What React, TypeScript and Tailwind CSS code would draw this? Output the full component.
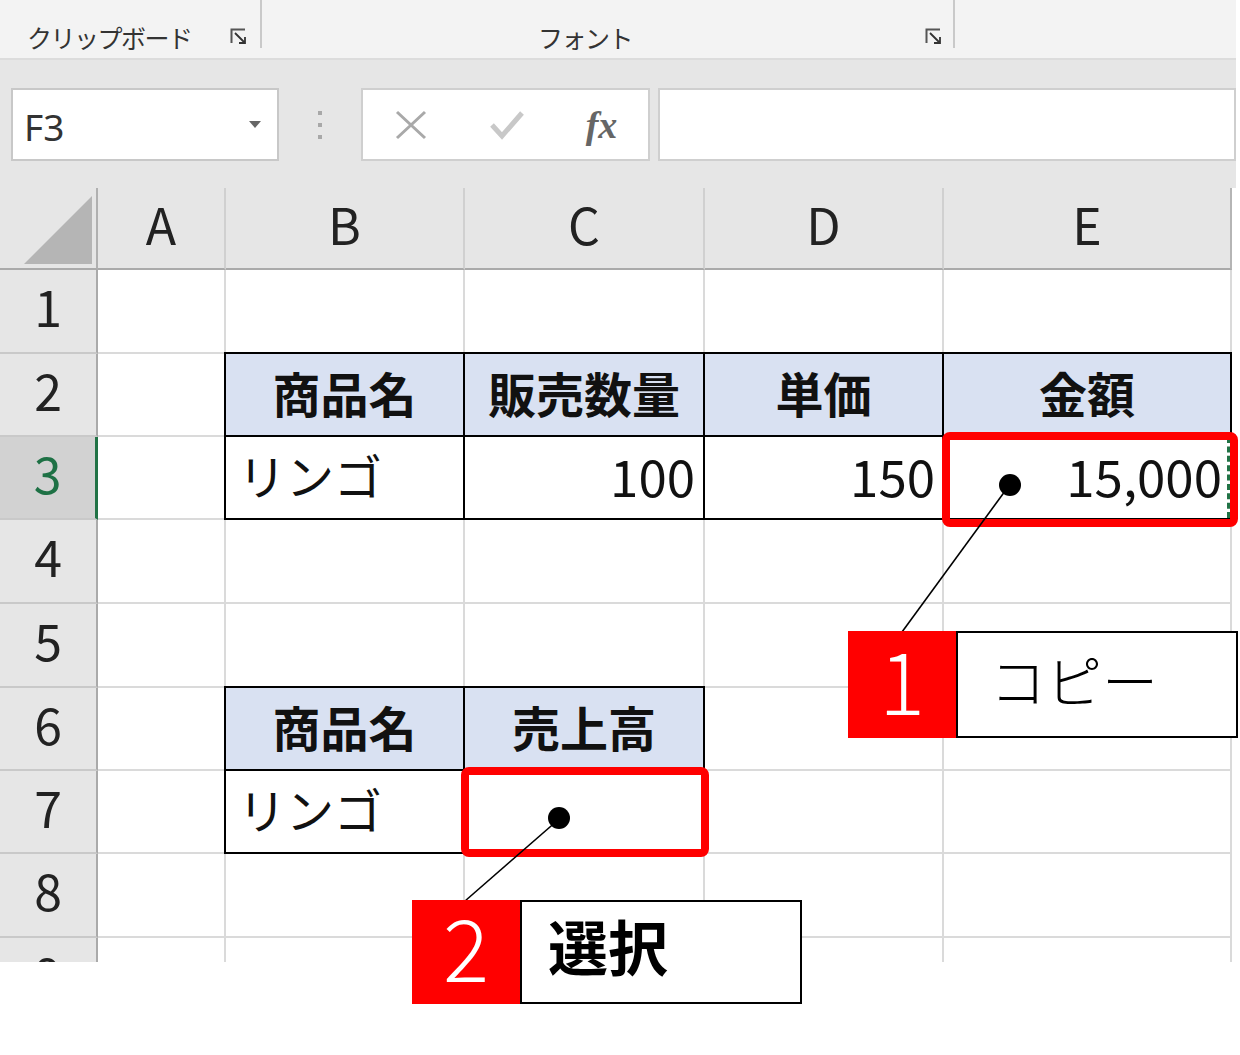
import React from 'react';

const letters = ['A', 'B', 'C', 'D', 'E'];
const colStart = ['col-start-1', 'col-start-2', 'col-start-3', 'col-start-4', 'col-start-5', 'col-start-6'];
const rowStart = [
    'row-start-1',
    'row-start-2',
    'row-start-3',
    'row-start-4',
    'row-start-5',
    'row-start-6',
    'row-start-7',
    'row-start-8',
    'row-start-9',
    'row-start-10',
];

function LauncherIcon() {
    return (
        <svg width="18" height="18" viewBox="0 0 18 18" className="shrink-0">
            <path d="M1.5 15 V1.5 H15" fill="none" stroke="#555" strokeWidth="2" />
            <path d="M5 5 L15 15 M15 9 V15 H9" fill="none" stroke="#333" strokeWidth="1.8" />
        </svg>
    );
}

function Ribbon() {
    return (
        <div className="flex h-[60px] w-[1236px] bg-[#f3f3f3] border-b-2 border-[#dcdcdc] text-[#333] font-['Noto_Sans_CJK_JP',sans-serif]">
            <div className="w-[262px] h-[48px] border-r-2 border-[#c9c9c9] flex items-center pl-[27px] pr-[12px] pt-[26px]">
                <span className="text-[25px] leading-none tracking-[-1.5px]">クリップボード</span>
                <span className="ml-auto">
                    <LauncherIcon />
                </span>
            </div>
            <div className="w-[693px] h-[48px] border-r-2 border-[#c9c9c9] flex items-center pl-[276px] pr-[10px] pt-[26px]">
                <span className="text-[25px] leading-none tracking-[-1.5px]">フォント</span>
                <span className="ml-auto">
                    <LauncherIcon />
                </span>
            </div>
        </div>
    );
}

function FormulaBar() {
    return (
        <div className="h-[128px] w-[1236px] bg-[#e6e6e6] pt-[28px] flex items-start">
            <div className="ml-[11px] w-[268px] h-[73px] bg-white border-2 border-[#c8c8c8] flex items-center pl-[11px] pr-[16px]">
                <span className="text-[37px] leading-none text-[#333] font-['Noto_Sans',sans-serif] pt-[4px]">F3</span>
                <svg width="12" height="7" viewBox="0 0 12 7" className="ml-auto">
                    <path d="M0 0 H12 L6 7 Z" fill="#666" />
                </svg>
            </div>
            <div className="w-[82px] h-[73px] flex items-center justify-center">
                <div className="flex flex-col gap-[8px]">
                    <div className="w-[4px] h-[4px] bg-[#a8a8a8]" />
                    <div className="w-[4px] h-[4px] bg-[#a8a8a8]" />
                    <div className="w-[4px] h-[4px] bg-[#a8a8a8]" />
                </div>
            </div>
            <div className="w-[289px] h-[73px] bg-white border-2 border-[#cfcfcf] flex items-center">
                <div className="w-[96px] flex justify-center">
                    <svg width="32" height="30" viewBox="0 0 32 30">
                        <path d="M2 2 L30 28 M30 2 L2 28" stroke="#a9a9a9" strokeWidth="3" fill="none" />
                    </svg>
                </div>
                <div className="w-[96px] flex justify-center">
                    <svg width="34" height="30" viewBox="0 0 34 30">
                        <path d="M2 15 L12 26 L32 3" stroke="#c8c8c8" strokeWidth="5" fill="none" />
                    </svg>
                </div>
                <div className="w-[93px] flex justify-center">
                    <span className="text-[38px] leading-none italic font-bold text-[#666] font-['Liberation_Serif',serif]">fx</span>
                </div>
            </div>
            <div className="ml-[8px] w-[578px] h-[73px] bg-white border-2 border-[#cfcfcf]" />
        </div>
    );
}

function Grid() {
    const cells: React.ReactNode[] = [];

    // header row
    cells.push(
        <div key="corner" className="col-start-1 row-start-1 bg-[#e6e6e6] border-r-2 border-b-2 border-r-[#b0b0b0] border-b-[#aaaaaa] flex items-end pl-[24px] pb-[4px]">
            <svg width="68" height="68" viewBox="0 0 68 68">
                <path d="M68 0 V68 H0 Z" fill="#b5b5b5" />
            </svg>
        </div>
    );
    letters.forEach((l, i) => {
        cells.push(
            <div
                key={'h' + l}
                className={
                    colStart[i + 1] +
                    ' row-start-1 bg-[#e6e6e6] border-b-2 border-b-[#aaaaaa] flex items-center justify-center pb-[11px] text-[50px] leading-none text-[#222] ' +
                    (i === 4 ? 'border-r-2 border-r-[#b5b5b5]' : 'border-r-2 border-r-[#d0d0d0]')
                }
            >
                {l}
            </div>
        );
    });

    for (let r = 1; r <= 9; r++) {
        const selected = r === 3;
        cells.push(
            <div
                key={'r' + r}
                className={
                    'col-start-1 ' +
                    rowStart[r] +
                    ' flex items-center justify-center pb-[12px] text-[50px] leading-none border-b-2 border-b-[#c9c9c9] ' +
                    (selected
                        ? 'bg-[#d2d2d2] text-[#1e7145] border-r-[3px] border-r-[#217346]'
                        : 'bg-[#e6e6e6] text-[#222] border-r-2 border-r-[#aaaaaa]')
                }
            >
                {r}
            </div>
        );
        letters.forEach((l, i) => {
            cells.push(<div key={l + r} className={colStart[i + 1] + ' ' + rowStart[r] + ' bg-white border-r-2 border-b-2 border-[#dadada]'} />);
        });
    }

    return (
        <div className="h-[774px] w-[1232px] overflow-hidden">
            <div className="grid grid-cols-[98px_128px_239px_240px_239px_288px] grid-rows-[82px_84px_83px_83px_84px_84px_83px_83px_84px_84px] font-['Noto_Sans_CJK_JP',sans-serif]">
                {cells}

                {/* table 1: B2:E3 */}
                <div className="col-start-3 col-end-7 row-start-3 row-end-5 -mt-[2px] -ml-[2px] border-t-2 border-l-2 border-black grid grid-cols-[239px_240px_239px_1fr] grid-rows-[83px_83px]">
                    {['商品名', '販売数量', '単価', '金額'].map((t) => (
                        <div key={t} className="bg-[#d9e1f2] border-r-2 border-b-2 border-black flex items-center justify-center pb-[6px] text-[48px] font-bold leading-none text-[#111]">
                            {t}
                        </div>
                    ))}
                    <div className="bg-white border-r-2 border-b-2 border-black flex items-center pl-[12px] pb-[8px] text-[48px] leading-none text-[#111]">
                        リンゴ
                    </div>
                    <div className="bg-white border-r-2 border-b-2 border-black flex items-center justify-end pr-[8px] pb-[4px] text-[51px] leading-none text-[#111]">
                        100
                    </div>
                    <div className="bg-white border-r-2 border-b-2 border-black flex items-center justify-end pr-[7px] pb-[4px] text-[51px] leading-none text-[#111]">
                        150
                    </div>
                    <div className="relative bg-white border-r-2 border-b-2 border-black flex items-center justify-end pr-[8px] pb-[4px] text-[51px] leading-none text-[#111]">
                        15,000
                        <div className="absolute right-0 top-0 bottom-0 border-r-[3px] border-dashed border-[#217346]" />
                    </div>
                </div>

                {/* table 2: B6:C7 */}
                <div className="col-start-3 col-end-5 row-start-7 row-end-9 -mt-[2px] -ml-[2px] border-t-2 border-l-2 border-black grid grid-cols-[239px_1fr] grid-rows-[83px_83px]">
                    {['商品名', '売上高'].map((t) => (
                        <div key={t} className="bg-[#d9e1f2] border-r-2 border-b-2 border-black flex items-center justify-center pb-[6px] text-[48px] font-bold leading-none text-[#111]">
                            {t}
                        </div>
                    ))}
                    <div className="bg-white border-r-2 border-b-2 border-black flex items-center pl-[12px] pb-[8px] text-[48px] leading-none text-[#111]">
                        リンゴ
                    </div>
                    <div className="bg-white border-r-2 border-b-2 border-black" />
                </div>
            </div>
        </div>
    );
}

function Callout({ num, label, bold }: { num: string; label: string; bold?: boolean }) {
    return (
        <div className="flex h-full font-['Noto_Sans_CJK_JP',sans-serif]">
            <div className="w-[108px] h-full bg-[#ff0000] flex items-center justify-center pb-[14px] text-white text-[86px] font-light leading-none">
                {num}
            </div>
            <div
                className={
                    'flex-1 h-full bg-white border-2 border-black flex items-center leading-none text-black ' +
                    (bold ? 'text-[60px] font-bold pl-[26px] pb-[14px]' : 'text-[56px] font-light pl-[32px] pb-[12px]')
                }
            >
                {label}
            </div>
        </div>
    );
}

export default function App() {
    return (
        <div className="relative w-[1240px] h-[1055px] bg-white overflow-hidden">
            <Ribbon />
            <FormulaBar />
            <Grid />

            {/* annotations */}
            <div className="absolute left-[942px] top-[432px] w-[296px] h-[95px] border-[8px] border-[#ff0000] rounded-[8px]" />
            <div className="absolute left-[461px] top-[767px] w-[248px] h-[90px] border-[8px] border-[#ff0000] rounded-[8px]" />

            <svg className="absolute left-0 top-0 pointer-events-none" width="1240" height="1055" viewBox="0 0 1240 1055">
                <line x1="1008" y1="487" x2="902" y2="632" stroke="#000" strokeWidth="1.6" />
                <line x1="558" y1="820" x2="465" y2="901" stroke="#000" strokeWidth="1.6" />
                <circle cx="1010" cy="485" r="11" fill="#000" />
                <circle cx="559" cy="818" r="11" fill="#000" />
            </svg>

            <div className="absolute left-[848px] top-[631px] w-[390px] h-[107px]">
                <Callout num="1" label="コピー" />
            </div>
            <div className="absolute left-[412px] top-[900px] w-[390px] h-[104px]">
                <Callout num="2" label="選択" bold />
            </div>
        </div>
    );
}
